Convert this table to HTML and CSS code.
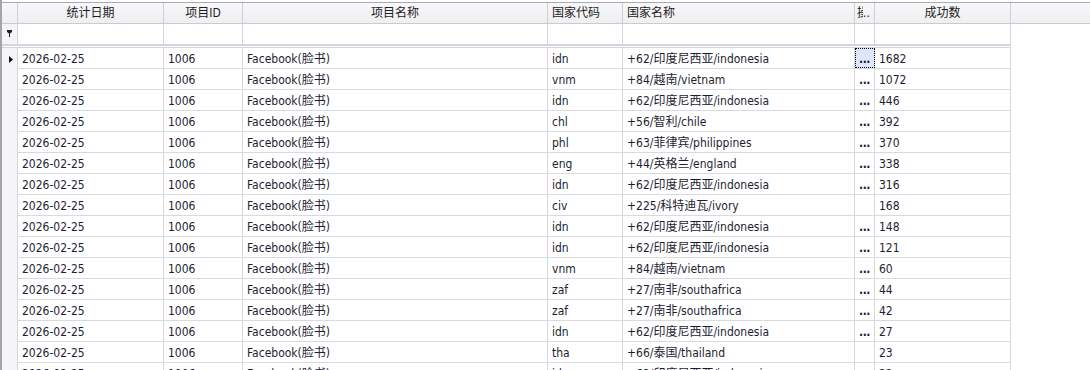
FILE: index.html
```html
<!DOCTYPE html>
<html lang="zh">
<head>
<meta charset="utf-8">
<link rel="stylesheet" href="styles.css">
</head>
<body>
<div class="wrap">
  <div class="hdr">
    <div class="c ind"></div>
    <div class="c center">统计日期</div>
    <div class="c center">项目ID</div>
    <div class="c center">项目名称</div>
    <div class="c">国家代码</div>
    <div class="c">国家名称</div>
    <div class="c narrow"><span class="clip">操作</span>..</div>
    <div class="c center">成功数</div>
    <div class="c fill"></div>
  </div>
  <div class="cols filter">
    <div class="c ind"><svg width="6" height="8" viewBox="0 0 6 8"><path d="M0 0H5V2L3 3.5V7H2V3.5L0 2Z" fill="#222"/></svg></div>
    <div class="c"></div><div class="c"></div><div class="c"></div><div class="c"></div><div class="c"></div><div class="c"></div><div class="c"></div>
  </div>
  <div class="body">
    <div class="cols row"><div class="c ind"><svg width="4" height="7" viewBox="0 0 4 7"><path d="M0 0L4 3.5L0 7Z" fill="#111"/></svg></div><div class="c">2026-02-25</div><div class="c">1006</div><div class="c">Facebook(脸书)</div><div class="c">idn</div><div class="c">+62/印度尼西亚/indonesia</div><div class="c dots focus">...</div><div class="c">1682</div></div>
    <div class="cols row"><div class="c ind"></div><div class="c">2026-02-25</div><div class="c">1006</div><div class="c">Facebook(脸书)</div><div class="c">vnm</div><div class="c">+84/越南/vietnam</div><div class="c dots">...</div><div class="c">1072</div></div>
    <div class="cols row"><div class="c ind"></div><div class="c">2026-02-25</div><div class="c">1006</div><div class="c">Facebook(脸书)</div><div class="c">idn</div><div class="c">+62/印度尼西亚/indonesia</div><div class="c dots">...</div><div class="c">446</div></div>
    <div class="cols row"><div class="c ind"></div><div class="c">2026-02-25</div><div class="c">1006</div><div class="c">Facebook(脸书)</div><div class="c">chl</div><div class="c">+56/智利/chile</div><div class="c dots">...</div><div class="c">392</div></div>
    <div class="cols row"><div class="c ind"></div><div class="c">2026-02-25</div><div class="c">1006</div><div class="c">Facebook(脸书)</div><div class="c">phl</div><div class="c">+63/菲律宾/philippines</div><div class="c dots">...</div><div class="c">370</div></div>
    <div class="cols row"><div class="c ind"></div><div class="c">2026-02-25</div><div class="c">1006</div><div class="c">Facebook(脸书)</div><div class="c">eng</div><div class="c">+44/英格兰/england</div><div class="c dots">...</div><div class="c">338</div></div>
    <div class="cols row"><div class="c ind"></div><div class="c">2026-02-25</div><div class="c">1006</div><div class="c">Facebook(脸书)</div><div class="c">idn</div><div class="c">+62/印度尼西亚/indonesia</div><div class="c dots">...</div><div class="c">316</div></div>
    <div class="cols row"><div class="c ind"></div><div class="c">2026-02-25</div><div class="c">1006</div><div class="c">Facebook(脸书)</div><div class="c">civ</div><div class="c">+225/科特迪瓦/ivory</div><div class="c dots"></div><div class="c">168</div></div>
    <div class="cols row"><div class="c ind"></div><div class="c">2026-02-25</div><div class="c">1006</div><div class="c">Facebook(脸书)</div><div class="c">idn</div><div class="c">+62/印度尼西亚/indonesia</div><div class="c dots">...</div><div class="c">148</div></div>
    <div class="cols row"><div class="c ind"></div><div class="c">2026-02-25</div><div class="c">1006</div><div class="c">Facebook(脸书)</div><div class="c">idn</div><div class="c">+62/印度尼西亚/indonesia</div><div class="c dots">...</div><div class="c">121</div></div>
    <div class="cols row"><div class="c ind"></div><div class="c">2026-02-25</div><div class="c">1006</div><div class="c">Facebook(脸书)</div><div class="c">vnm</div><div class="c">+84/越南/vietnam</div><div class="c dots">...</div><div class="c">60</div></div>
    <div class="cols row"><div class="c ind"></div><div class="c">2026-02-25</div><div class="c">1006</div><div class="c">Facebook(脸书)</div><div class="c">zaf</div><div class="c">+27/南非/southafrica</div><div class="c dots">...</div><div class="c">44</div></div>
    <div class="cols row"><div class="c ind"></div><div class="c">2026-02-25</div><div class="c">1006</div><div class="c">Facebook(脸书)</div><div class="c">zaf</div><div class="c">+27/南非/southafrica</div><div class="c dots">...</div><div class="c">42</div></div>
    <div class="cols row"><div class="c ind"></div><div class="c">2026-02-25</div><div class="c">1006</div><div class="c">Facebook(脸书)</div><div class="c">idn</div><div class="c">+62/印度尼西亚/indonesia</div><div class="c dots">...</div><div class="c">27</div></div>
    <div class="cols row"><div class="c ind"></div><div class="c">2026-02-25</div><div class="c">1006</div><div class="c">Facebook(脸书)</div><div class="c">tha</div><div class="c">+66/泰国/thailand</div><div class="c dots"></div><div class="c">23</div></div>
    <div class="cols row"><div class="c ind"></div><div class="c">2026-02-25</div><div class="c">1006</div><div class="c">Facebook(脸书)</div><div class="c">idn</div><div class="c">+62/印度尼西亚/indonesia</div><div class="c dots">...</div><div class="c">22</div></div>
  </div>
</div>
</body>
</html>
```
FILE: styles.css
```css
* { box-sizing: border-box; }
html, body { margin: 0; padding: 0; background: #fff; }
body {
  font-family: "DejaVu Sans Condensed", "Liberation Sans", "Noto Sans CJK SC", sans-serif;
  font-size: 12px;
  color: #1e1e32;
}
.wrap {
  width: 1090px;
  height: 370px;
  overflow: hidden;
  border-left: 2px solid #a4a4ae;
  padding-top: 2px;
}
.hdr, .cols {
  display: grid;
  grid-template-columns: 16px 146px 79px 305px 75px 232px 20px 136px;
}
.hdr {
  grid-template-columns: 16px 146px 79px 305px 75px 232px 20px 136px 1fr;
  height: 22px;
  border-top: 1px solid #a9a9b5;
  border-bottom: 1px solid #cacad2;
  background: linear-gradient(#f8f8fa, #efeff2);
}
.c {
  border-right: 1px solid #d6d6de;
  padding: 0 4px;
  line-height: 20px;
  height: 20px;
  white-space: nowrap;
  overflow: hidden;
}
.hdr .c { border-right-color: #cfcfd7; color: #1c1c1c; }
.hdr .fill { border-right: none; }
.center { text-align: center; }
.narrow { padding: 0 0 0 2px; }
.clip {
  display: inline-block;
  width: 6px;
  overflow: hidden;
  vertical-align: top;
}
.ind {
  padding: 0;
  display: flex;
  align-items: center;
  justify-content: center;
}
.filter {
  width: 1009px;
  height: 22px;
  border-bottom: 2px solid #d4d4dc;
  margin-bottom: 1px;
}
.filter .ind { background: #f5f5f7; padding-left: 1px; }
.body {
  width: 1009px;
  border-top: 1px solid #d4d4dc;
}
.row {
  height: 21px;
  border-bottom: 1px solid #d9d9e0;
}
.row .c { line-height: 22px; }
.row .ind {
  background: #f5f5f7;
  height: 21px;
  margin-bottom: -1px;
  justify-content: flex-start;
  padding-left: 7px;
  padding-top: 1px;
}
.dots {
  padding: 0;
  text-align: center;
  letter-spacing: -0.5px;
  font-weight: bold;
}
.focus {
  background: #dde7f9;
  outline: 1px dotted #000;
  outline-offset: -1px;
}
```
